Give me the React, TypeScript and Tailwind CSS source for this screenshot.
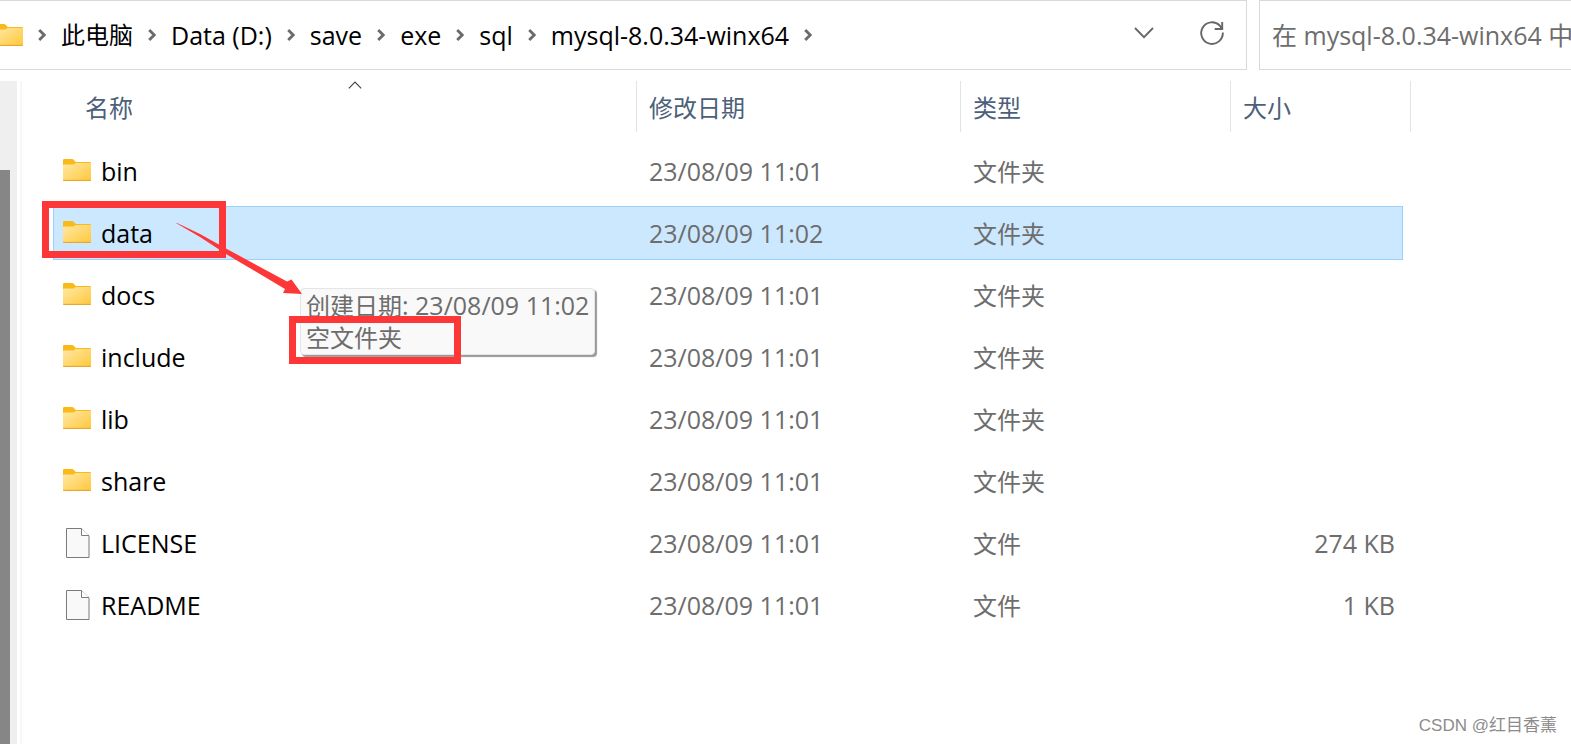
import { Fragment, useState } from 'react';

interface Entry {
  name: string;
  date: string;
  kind: 'folder' | 'file';
  size?: string;
}

const CRUMBS = ['Data (D:)', 'save', 'exe', 'sql', 'mysql-8.0.34-winx64'];

const ENTRIES: Entry[] = [
  { name: 'bin', date: '23/08/09 11:01', kind: 'folder' },
  { name: 'data', date: '23/08/09 11:02', kind: 'folder' },
  { name: 'docs', date: '23/08/09 11:01', kind: 'folder' },
  { name: 'include', date: '23/08/09 11:01', kind: 'folder' },
  { name: 'lib', date: '23/08/09 11:01', kind: 'folder' },
  { name: 'share', date: '23/08/09 11:01', kind: 'folder' },
  { name: 'LICENSE', date: '23/08/09 11:01', kind: 'file', size: '274 KB' },
  { name: 'README', date: '23/08/09 11:01', kind: 'file', size: '1 KB' },
];

function FolderIcon() {
  return (
    <svg width="28" height="22" viewBox="0 0 28 22" className="shrink-0" aria-hidden="true">
      <defs>
        <linearGradient id="folder-front" x1="0" y1="0" x2="1" y2="1">
          <stop offset="0" stopColor="#ffe8a6" />
          <stop offset="1" stopColor="#ffc83a" />
        </linearGradient>
      </defs>
      <path d="M0 1.2Q0 0 1.2 0H9q1 0 1.7.8L12.8 3H27q1 0 1 1v4H0z" fill="#f9b919" />
      <path d="M0 6.5Q0 5.6 1 5.6H9.6q.9 0 1.6-.7l.6-.5q.6-.5 1.4-.5H28v16.9q0 1.2-1.2 1.2H1.2Q0 22 0 20.8z" fill="url(#folder-front)" />
      <path d="M.2 21.4h27.6" stroke="#e9a52c" strokeWidth="1.1" />
    </svg>
  );
}

function FileIcon() {
  return (
    <svg width="24" height="30" viewBox="0 0 24 30" className="shrink-0" aria-hidden="true">
      <path d="M.5.5h15l7.5 7.3v21.7H.5z" fill="#f9f9f9" stroke="#7b7b7b" />
      <path d="M15.5.5v7H23" fill="#fff" stroke="#7b7b7b" />
    </svg>
  );
}

function Separator() {
  return (
    <svg width="8" height="12" viewBox="0 0 8 12" className="shrink-0" aria-hidden="true">
      <path d="M1.2 1l5 5-5 5" fill="none" stroke="#6b6b6b" strokeWidth="2.8" />
    </svg>
  );
}

function AddressBar() {
  return (
    <div className="flex h-[70px] min-w-0 flex-1 items-center overflow-hidden border border-l-0 border-[#d9d9d9]">
      <nav className="-ml-[5px] flex min-w-0 flex-1 items-center gap-[15px] text-black">
        <FolderIcon />
        <Separator />
        <button type="button" className="text-2xl whitespace-nowrap">
          此电脑
        </button>
        <Separator />
        {CRUMBS.map((crumb) => (
          <Fragment key={crumb}>
            <button type="button" className="whitespace-nowrap">
              {crumb}
            </button>
            <Separator />
          </Fragment>
        ))}
      </nav>
      <div className="flex items-center gap-[46px] pr-[22px] pb-1">
        <button type="button" aria-label="历史记录">
          <svg width="20" height="12" viewBox="0 0 20 12" fill="none" stroke="#666" strokeWidth="1.8" aria-hidden="true">
            <path d="M1 1l9 9.2L19 1" />
          </svg>
        </button>
        <button type="button" aria-label="刷新">
          <svg width="24" height="24" viewBox="0 0 24 24" fill="none" stroke="#666" strokeWidth="1.9" aria-hidden="true">
            <path d="M22.8 11.5A10.8 10.8 0 1 1 19.8 4.6L22 7.6" />
            <path d="M22.2 1v7h-7.5" />
          </svg>
        </button>
      </div>
    </div>
  );
}

function FileRow({ entry, selected, onSelect }: { entry: Entry; selected: boolean; onSelect: () => void }) {
  const fill = selected ? 'border-[#99d1ff] bg-[#cce8ff]' : 'border-transparent';

  return (
    <tr onClick={onSelect} className="text-[#6d6d6d]">
      <td className="py-1 pl-[30px]">
        <div className={`flex h-[54px] items-center border-y border-l pl-[9px] text-black ${fill}`}>
          {entry.kind === 'folder' ? (
            <span className="w-[38px] pb-0.5">
              <FolderIcon />
            </span>
          ) : (
            <span className="w-[38px] pl-[3px]">
              <FileIcon />
            </span>
          )}
          {entry.name}
        </div>
      </td>
      <td className="py-1">
        <div className={`flex h-[54px] items-center border-y pl-3 ${fill}`}>{entry.date}</div>
      </td>
      <td className="py-1">
        <div className={`flex h-[54px] items-center border-y pt-0.5 pl-3 text-2xl ${fill}`}>
          {entry.kind === 'folder' ? '文件夹' : '文件'}
        </div>
      </td>
      <td className="py-1 pr-2">
        <div className={`flex h-[54px] items-center justify-end border-y border-r pr-[7px] ${fill}`}>{entry.size}</div>
      </td>
    </tr>
  );
}

function FileTable() {
  const [selected, setSelected] = useState('data');

  return (
    <table className="w-[1388px] table-fixed border-collapse self-start text-left">
      <colgroup>
        <col />
        <col className="w-[324px]" />
        <col className="w-[270px]" />
        <col className="w-[180px]" />
      </colgroup>
      <thead className="text-2xl text-[#4c607a]">
        <tr>
          <th className="pb-2 pl-[50px] font-normal">
            <div className="relative flex h-[51px] items-center border-r border-[#e3e3e3] pt-0.5 pl-3">
              名称
              <svg width="14" height="8" viewBox="0 0 14 8" className="absolute top-0 left-1/2 -translate-x-1/2" aria-hidden="true">
                <path d="M.8 7.4L7 1.2l6.2 6.2" fill="none" stroke="#444" strokeWidth="1.2" />
              </svg>
            </div>
          </th>
          {['修改日期', '类型', '大小'].map((label) => (
            <th key={label} className="pb-2 font-normal">
              <div className="flex h-[51px] items-center border-r border-[#e3e3e3] pt-0.5 pl-3">{label}</div>
            </th>
          ))}
        </tr>
      </thead>
      <tbody>
        {ENTRIES.map((entry) => (
          <FileRow
            key={entry.name}
            entry={entry}
            selected={entry.name === selected}
            onSelect={() => setSelected(entry.name)}
          />
        ))}
      </tbody>
    </table>
  );
}

// Red boxes and arrow drawn on top of the file list
function Annotations() {
  return (
    <div className="pointer-events-none">
      <div className="absolute top-[201px] left-[42px] h-[57px] w-[184px] border-[7px] border-[#fd3737]" />
      <div className="absolute top-[316px] left-[289px] h-[48px] w-[172px] border-[7px] border-[#fd3737]" />
      <svg width="126" height="72" viewBox="0 0 126 72" className="absolute top-[223px] left-[176px]" aria-hidden="true">
        <path d="M0 0L1 0L24 11L50 25.5L111 58.5L115.5 56.5L126 71L107 70L109 66L50 31L24 14z" fill="#fd3737" />
      </svg>
    </div>
  );
}

export default function App() {
  return (
    <div className="relative flex min-h-screen flex-col overflow-hidden bg-white font-['Open_Sans','Noto_Sans_CJK_SC',sans-serif] text-[25px] leading-8">
      <header className="flex gap-3">
        <AddressBar />
        <input
          type="text"
          aria-label="搜索"
          placeholder="在 mysql-8.0.34-winx64 中搜索"
          className="h-[70px] w-[312px] border border-r-0 border-[#d9d9d9] pl-3 text-[#6d6d6d] outline-none placeholder:text-[#6d6d6d]"
        />
      </header>

      <main className="mt-[11px] flex flex-1">
        <div className="flex w-[17px] shrink-0 flex-col bg-[#efefef] pt-[89px]">
          <div className="w-[10px] flex-1 bg-[#868686]" />
        </div>
        <div className="ml-[3px] w-[3px] shrink-0 border-r border-white bg-[#f7f7f7]" />
        <FileTable />
      </main>

      <div
        role="tooltip"
        className="absolute top-[288px] left-[300px] rounded-sm border border-[#e5e5e5] bg-[#f9f9f9] px-[5px] text-2xl leading-8 whitespace-nowrap text-[#6d6d6d] shadow-[2px_2px_1px_#999]"
      >
        <p>
          创建日期<span className="text-[25px] leading-8">: 23/08/09 11:02</span>
        </p>
        <p>空文件夹</p>
      </div>

      <Annotations />

      <p className="absolute right-[14px] bottom-1 font-['Liberation_Sans','Noto_Sans_CJK_SC',sans-serif] text-[17px] leading-7 text-[#8c8c8c]">
        CSDN @红目香薰
      </p>
    </div>
  );
}
